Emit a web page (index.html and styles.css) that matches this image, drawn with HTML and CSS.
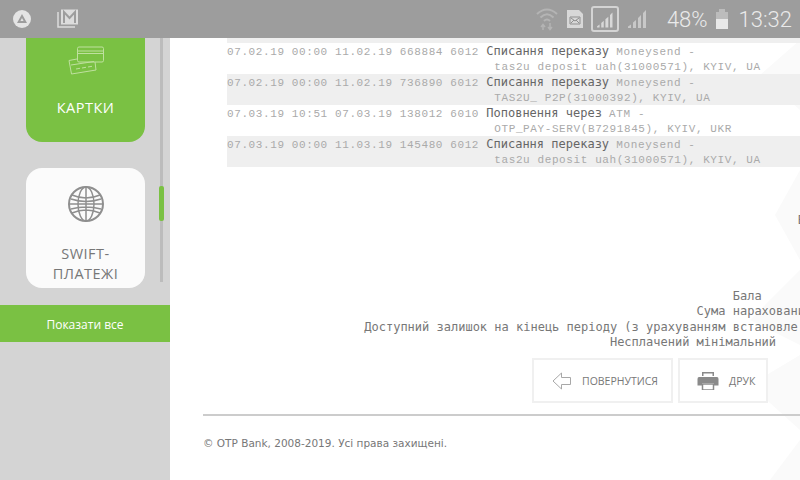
FILE: index.html
```html
<!DOCTYPE html>
<html lang="uk">
<head>
  <meta charset="UTF-8">
  <meta name="viewport" content="width=device-width, initial-scale=1.0">
  <title>OTP Bank</title>
  <link rel="stylesheet" href="styles.css">
</head>
<body>

  <!-- Status bar -->
  <div class="status-bar">
    <div class="status-left">
      <svg class="st-logo" width="20" height="20" viewBox="0 0 20 20"><circle cx="10" cy="10" r="9" fill="#e4e4e4"/><path d="M10 5 L15 14 H5 Z M10 9 L8.4 12 H11.6 Z" fill="#9d9d9d" fill-rule="evenodd"/></svg>
      <svg class="st-mail" width="24" height="22" viewBox="0 0 24 22" fill="none" stroke="#dcdcdc"><path d="M2 4 V19 H19" stroke-width="1.5"/><rect x="5" y="1.5" width="17" height="15" fill="#dcdcdc" stroke="none"/><path d="M8 15 V4 L13.5 10 L19 4 V15" stroke="#9d9d9d" stroke-width="2"/></svg>
    </div>
    <div class="status-right">
      <svg width="24" height="26" viewBox="0 0 24 26" fill="none" stroke="#b4b4b4" stroke-width="2"><path d="M2 8 Q12 -1 22 8 M5.5 11.5 Q12 5 18.500 11.500 M9 15 Q12 12 15 15"/><path d="M8 24 V19 M6 21 L8 18.500 L10 21 M15 17 V23 M13 21 L15 23.500 L17 21" stroke-width="1.5"/></svg>
      <svg width="18" height="20" viewBox="0 0 18 20"><path d="M1 1 H13 L17 5 V19 H1 Z" fill="#d8d8d8"/><path d="M4 8 H14 V15 H4 Z M5 9 L9 12 L13 9 M5 14 L8 11 M13 14 L10 11" fill="none" stroke="#8f8f8f"/></svg>
      <div class="sim-box">
        <svg width="24" height="20" viewBox="0 0 24 20"><path d="M21 1 V19 H18 V4 Z M16 6 V19 H12.500 V9 Z M10.500 11 V19 H7.500 V13.500 Z M5.500 15.500 V19 H2.500 V17.500 Z" fill="#d8d8d8"/></svg>
      </div>
      <svg width="22" height="20" viewBox="0 0 22 20"><path d="M20 1 V19 H17 V4 Z M15 6 V19 H12 V9 Z M10 11 V19 H7 V13.500 Z M5 15.500 V19 H2 V17.500 Z" fill="#c8c8c8"/></svg>
      <span class="st-text st-percent">48%</span>
      <svg width="14" height="20" viewBox="0 0 14 20"><rect x="1" y="3" width="12" height="17" fill="#bcbcbc"/><rect x="4" y="0" width="6" height="3" fill="#bcbcbc"/><rect x="1" y="10" width="12" height="10" fill="#e8e8e8"/></svg>
      <span class="st-text st-time">13:32</span>
    </div>
  </div>

  <div class="layout">
    <!-- Sidebar -->
    <div class="sidebar">
      <div class="menu-wrap">
        <div class="menu-cards">
          <div class="card card-green">
            <svg class="card-icon" width="36" height="30" viewBox="0 0 36 30" fill="none" stroke="#bfe09f" stroke-width="1"><rect x="9.500" y="1" width="26" height="15" rx="1.500"/><path d="M9.500 5 H35.500 M9.500 7.500 H35.500"/><path d="M9 13 L1 14.500 L3.500 28 L28 24 L27 16"/><path d="M3 19 L26 15.500 M8 23 L12 22.300 M14 22 L18 21.300 M20 21 L24 20.300"/></svg>
            <div class="card-title">КАРТКИ</div>
          </div>
          <div class="card card-white">
            <svg class="card-icon" width="36" height="36" viewBox="0 0 36 36" fill="none" stroke="#8f8f8f"><circle cx="18" cy="18" r="17" stroke-width="2"/><ellipse cx="18" cy="18" rx="8" ry="17" stroke-width="1.500"/><path d="M18 1 V35 M1 18 H35 M4 9 Q18 15 32 9 M4 27 Q18 21 32 27 M3 13 Q18 18 33 13 M3 23 Q18 19 33 23" stroke-width="1.500"/></svg>
            <div class="card-title">SWIFT-<br>ПЛАТЕЖІ</div>
          </div>
        </div>
        <div class="scroll-track"><div class="scroll-thumb"></div></div>
      </div>
      <div class="show-all">
        Показати все
        <span class="show-circle">
          <svg width="18" height="18" viewBox="0 0 18 18" fill="none" stroke="#e6f3d8" stroke-width="1.300"><circle cx="9" cy="9" r="7.500"/><path d="M5 8 Q9 12.500 13 8"/></svg>
        </span>
      </div>
    </div>

    <!-- Content -->
    <div class="content">
      <svg class="bg-shapes" width="120" height="480" viewBox="0 0 120 480"><path d="M120 40 L80 75 L120 110 Z M120 170 L95 215 L120 260 Z M120 270 L70 320 L120 345 Z M120 355 L70 385 L120 430 Z M120 440 L90 480 H120 Z" fill="#fafafa"/></svg>
      <div class="statement">
        <div class="row row-grey"><div class="line">                                     <span class="lat">tas2u deposit uah(31000571), KYIV, UA</span></div></div>
        <div class="row">
          <div class="line"><span class="lat">07.02.19 00:00 11.02.19 668884 6012</span> Списання переказу <span class="lat">Moneysend -</span></div>
          <div class="line">                                     <span class="lat">tas2u deposit uah(31000571), KYIV, UA</span></div>
        </div>
        <div class="row row-grey">
          <div class="line"><span class="lat">07.02.19 00:00 11.02.19 736890 6012</span> Списання переказу <span class="lat">Moneysend -</span></div>
          <div class="line">                                     <span class="lat">TAS2U_ P2P(31000392), KYIV, UA</span></div>
        </div>
        <div class="row">
          <div class="line"><span class="lat">07.03.19 10:51 07.03.19 138012 6010</span> Поповнення через <span class="lat">ATM -</span></div>
          <div class="line">                                     <span class="lat">OTP_PAY-SERV(B7291845), KYIV, UKR</span></div>
        </div>
        <div class="row row-grey">
          <div class="line"><span class="lat">07.03.19 00:00 11.03.19 145480 6012</span> Списання переказу <span class="lat">Moneysend -</span></div>
          <div class="line">                                     <span class="lat">tas2u deposit uah(31000571), KYIV, UA</span></div>
        </div>
      </div>

      <div class="totals">
        <div class="tline tline-first">                                                                               В</div>
        <div class="tline tline-gap">                                                                      Бала</div>
        <div class="tline">                                                                 Сума нараховани</div>
        <div class="tline">                   Доступний залишок на кінець періоду (з урахуванням встановле</div>
        <div class="tline">                                                     Несплачений мінімальний</div>
      </div>

      <div class="buttons">
        <div class="btn btn-back">
          <svg width="20" height="18" viewBox="0 0 20 18" fill="none" stroke="#a8a8a8"><path d="M9.500 1 L1 9 L9.500 17 V12.500 H18.500 V5.500 H9.500 Z"/></svg>
          ПОВЕРНУТИСЯ
        </div>
        <div class="btn btn-print">
          <svg width="22" height="18" viewBox="0 0 22 18" fill="#8a8a8a"><path d="M5 0 H17 V4 H15.500 V1.500 H6.500 V4 H5 Z"/><path d="M2 5 H20 Q21.500 5 21.500 7 V13.500 H17 V11 H5 V13.500 H.5 V7 Q.5 5 2 5 Z"/><path d="M5.500 12 H16.500 V18 H5.500 Z" fill="none" stroke="#8a8a8a" stroke-width="1.500"/></svg>
          ДРУК
        </div>
      </div>

      <div class="footer">© OTP Bank, 2008-2019. Усі права захищені.</div>
    </div>
  </div>

</body>
</html>
```

FILE: styles.css
```css
* {
  margin: 0;
  padding: 0;
  box-sizing: border-box;
}

html, body {
  width: 800px;
  height: 480px;
  overflow: hidden;
}

body {
  position: relative;
  background-color: #fff;
  font-family: 'Open Sans', sans-serif;
}

/* Status bar */
.status-bar {
  position: absolute;
  top: 0;
  left: 0;
  z-index: 5;
  width: 800px;
  height: 38px;
  display: flex;
  justify-content: space-between;
  align-items: center;
  padding: 0 8px 0 12px;
  background-color: #9d9d9d;
}

.status-left {
  display: flex;
  align-items: center;
  gap: 24px;
}

.status-right {
  display: flex;
  align-items: center;
  gap: 7px;
}

.sim-box {
  display: flex;
  width: 28px;
  height: 26px;
  padding: 2px;
  border: 2px solid #d4d4d4;
  border-radius: 3px;
}

.st-text {
  font-family: 'Roboto', sans-serif;
  font-weight: 300;
  font-size: 22px;
  color: #eaeaea;
}

.st-percent {
  margin-left: 12px;
}

.st-time {
  margin-left: 3px;
}

.layout {
  display: flex;
  height: 480px;
}

/* Sidebar */
.sidebar {
  width: 170px;
  flex-shrink: 0;
  background-color: #d4d4d4;
}

.menu-wrap {
  display: flex;
  height: 305px;
  padding-left: 26px;
}

.menu-cards {
  width: 119px;
  display: flex;
  flex-direction: column;
  gap: 26px;
  margin-top: -2px;
}

.card {
  height: 120px;
  border-radius: 16px;
  display: flex;
  flex-direction: column;
  align-items: center;
  text-align: center;
}

.card-green {
  height: 144px;
  justify-content: flex-end;
  padding-bottom: 24px;
  background-color: #7ac143;
  color: #fff;
}

.card-green .card-icon {
  margin-bottom: 22px;
}

.card-white {
  background-color: #fbfbfb;
  color: #777;
  padding-top: 18px;
}

.card-white .card-title {
  margin-top: 22px;
}

.card-title {
  font-size: 14.500px;
  line-height: 20px;
  letter-spacing: 0.500px;
}

.scroll-track {
  position: relative;
  width: 3px;
  height: 282px;
  margin-left: 15px;
  background-color: #bcbcbc;
}

.scroll-thumb {
  position: absolute;
  top: 186px;
  left: -1px;
  width: 5px;
  height: 35px;
  border-radius: 2px;
  background-color: #7ac143;
}

.show-all {
  position: relative;
  height: 37px;
  line-height: 39px;
  text-align: center;
  font-size: 12px;
  color: #fff;
  background-color: #7ac143;
}

.show-circle {
  position: absolute;
  left: 72px;
  top: 23px;
  z-index: -1;
  width: 28px;
  height: 28px;
  display: flex;
  align-items: center;
  justify-content: center;
  border-radius: 50%;
  background-color: #7ac143;
}

.show-circle svg {
  position: relative;
  top: 1px;
}

/* Content */
.content {
  position: relative;
  flex: 1;
  min-width: 0;
  overflow: hidden;
  padding: 12px 0 0 33px;
}

.bg-shapes {
  position: absolute;
  top: 0;
  right: 0;
}

.statement {
  position: relative;
  margin-left: 24px;
  width: 620px;
}

.row {
  height: 31px;
  padding-top: 1px;
}

.row-grey {
  background-color: #efefef;
}

.line {
  height: 15px;
  line-height: 15px;
  white-space: pre;
  font-family: 'DejaVu Sans Mono', monospace;
  font-size: 12px;
  color: #666;
}

.lat {
  font-family: 'Liberation Mono', monospace;
  font-size: 11px;
  letter-spacing: 0.600px;
  color: #aaa;
}

.totals {
  position: relative;
  margin-left: 24px;
  height: 181px;
  overflow: hidden;
  padding-top: 46px;
}

.tline {
  height: 15.500px;
  line-height: 15.500px;
  white-space: pre;
  font-family: 'DejaVu Sans Mono', monospace;
  font-size: 12px;
  color: #777;
}

.tline-gap {
  margin-top: 60px;
}

.buttons {
  position: relative;
  display: flex;
  gap: 5px;
  margin-left: 329px;
  margin-top: 10px;
}

.btn {
  height: 45px;
  display: flex;
  align-items: center;
  gap: 10px;
  border: 2px solid #f0f0f0;
  font-size: 10.500px;
  color: #777;
  background-color: #fff;
}

.btn-back {
  width: 141px;
  padding-left: 18px;
}

.btn-print {
  width: 90px;
  padding-left: 17px;
}

.footer {
  position: relative;
  margin-top: 11px;
  padding-top: 21px;
  border-top: 2px solid #ccc;
  font-family: 'DejaVu Sans', sans-serif;
  font-size: 10.500px;
  color: #777;
}
```
